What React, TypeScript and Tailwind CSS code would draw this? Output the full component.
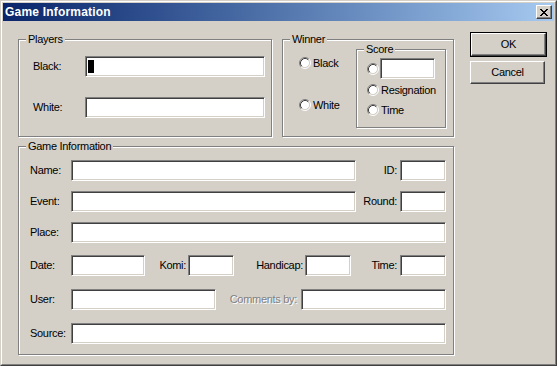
import React from "react";

// classic win2k dialog bits
const Field = ({ className, caret }: { className: string; caret?: boolean }) => (
  <div
    className={`${className} h-[21px] shrink-0 bg-white flex items-center border border-t-[#808080] border-l-[#808080] border-b-white border-r-white shadow-[inset_1px_1px_0_#404040,inset_-1px_-1px_0_#d4d0c8]`}
  >
    {caret && <span className="ml-[2px] w-[6px] h-[13px] bg-black" />}
  </div>
);

const Radio = () => (
  <svg width="12" height="12" viewBox="0 0 12 12" className="shrink-0">
    <circle cx="6" cy="6" r="4.5" fill="#fff" />
    <path d="M2.11 9.89A5.5 5.5 0 0 1 9.89 2.11" fill="none" stroke="#808080" />
    <path d="M9.89 2.11A5.5 5.5 0 0 1 2.11 9.89" fill="none" stroke="#fff" />
    <path d="M2.82 9.18A4.5 4.5 0 0 1 9.18 2.82" fill="none" stroke="#404040" />
    <path d="M9.18 2.82A4.5 4.5 0 0 1 2.82 9.18" fill="none" stroke="#d4d0c8" />
  </svg>
);

const Group = ({
  title,
  className,
  children,
}: {
  title: string;
  className: string;
  children: React.ReactNode;
}) => (
  <div
    className={`${className} relative shrink-0 border border-[#808080] shadow-[inset_1px_1px_0_#fff,1px_1px_0_#fff]`}
  >
    <span className="absolute -top-[8px] left-[7px] px-[2px] leading-[14px] bg-[#d4d0c8]">
      {title}
    </span>
    {children}
  </div>
);

const Label = ({ className, children }: { className: string; children: React.ReactNode }) => (
  <span className={`${className} shrink-0 leading-none`}>{children}</span>
);

const Button = ({ label }: { label: string }) => (
  <div className="w-[75px] h-[23px] flex items-center justify-center bg-[#d4d0c8] border border-t-white border-l-white border-b-[#404040] border-r-[#404040] shadow-[inset_-1px_-1px_0_#808080]">
    {label}
  </div>
);

const CloseGlyph = () => (
  <svg width="8" height="7" viewBox="0 0 8 7" shapeRendering="crispEdges">
    <path
      d="M0 0h2v1H0zM6 0h2v1H6zM1 1h2v1H1zM5 1h2v1H5zM2 2h4v1H2zM3 3h2v1H3zM2 4h4v1H2zM1 5h2v1H1zM5 5h2v1H5zM0 6h2v1H0zM6 6h2v1H6z"
      fill="#000"
    />
  </svg>
);

export default function App() {
  return (
    <div className="w-[557px] h-[366px] overflow-hidden bg-[#d4d0c8] text-[11px] tracking-[-0.3px] text-black font-['Liberation_Sans',Arial,sans-serif] border border-t-[#d4d0c8] border-l-[#d4d0c8] border-b-[#404040] border-r-[#404040]">
      <div className="h-full border border-t-white border-l-white border-b-[#808080] border-r-[#808080] p-px flex flex-col">
        {/* title bar */}
        <div className="h-[18px] shrink-0 flex items-center justify-between pl-[2px] pr-[2px] bg-gradient-to-r from-[#0a246a] to-[#a6caf0]">
          <span className="text-white font-bold text-[12px] tracking-[0.2px] leading-none">
            Game Information
          </span>
          <div className="w-[16px] h-[14px] flex items-center justify-center bg-[#d4d0c8] border border-t-white border-l-white border-b-[#404040] border-r-[#404040] shadow-[inset_-1px_-1px_0_#808080]">
            <CloseGlyph />
          </div>
        </div>

        <div className="flex items-start pl-[15px]">
          <div className="mt-[18px] w-[436px] shrink-0">
            <div className="flex gap-[10px]">
              <Group title="Players" className="w-[254px] h-[98px]">
                <div className="pt-[16px] pl-[14px] flex flex-col gap-[20px]">
                  <div className="flex items-center">
                    <Label className="w-[52px]">Black:</Label>
                    <Field className="w-[180px]" caret />
                  </div>
                  <div className="flex items-center">
                    <Label className="w-[52px]">White:</Label>
                    <Field className="w-[180px]" />
                  </div>
                </div>
              </Group>

              <Group title="Winner" className="w-[172px] h-[98px]">
                <div className="flex">
                  <div className="w-[73px] shrink-0 pl-[16px] pt-[16px] flex flex-col gap-[28px]">
                    <div className="h-[14px] flex items-center">
                      <Radio />
                      <span className="ml-[2px]">Black</span>
                    </div>
                    <div className="h-[14px] flex items-center">
                      <Radio />
                      <span className="ml-[2px]">White</span>
                    </div>
                  </div>
                  <Group title="Score" className="mt-[9px] w-[90px] h-[79px]">
                    <div className="pl-[10px] pt-[8px] flex flex-col">
                      <div className="h-[21px] flex items-center">
                        <Radio />
                        <Field className="ml-[1px] w-[55px]" />
                      </div>
                      <div className="mt-[4px] h-[14px] flex items-center">
                        <Radio />
                        <span className="ml-[2px]">Resignation</span>
                      </div>
                      <div className="mt-[6px] h-[14px] flex items-center">
                        <Radio />
                        <span className="ml-[2px]">Time</span>
                      </div>
                    </div>
                  </Group>
                </div>
              </Group>
            </div>

            <Group title="Game Information" className="mt-[9px] w-[436px] h-[209px]">
              <div className="pl-[11px] pt-[13px] flex flex-col">
                <div className="flex items-center">
                  <Label className="w-[41px]">Name:</Label>
                  <Field className="w-[285px]" />
                  <Label className="w-[44px] text-right pr-[3px]">ID:</Label>
                  <Field className="w-[46px]" />
                </div>
                <div className="mt-[10px] flex items-center">
                  <Label className="w-[41px]">Event:</Label>
                  <Field className="w-[285px]" />
                  <Label className="w-[44px] text-right pr-[3px]">Round:</Label>
                  <Field className="w-[46px]" />
                </div>
                <div className="mt-[10px] flex items-center">
                  <Label className="w-[41px]">Place:</Label>
                  <Field className="w-[375px]" />
                </div>
                <div className="mt-[12px] flex items-center">
                  <Label className="w-[41px]">Date:</Label>
                  <Field className="w-[74px]" />
                  <Label className="w-[43px] text-right pr-[2px]">Komi:</Label>
                  <Field className="w-[46px]" />
                  <Label className="w-[71px] text-right pr-[2px]">Handicap:</Label>
                  <Field className="w-[46px]" />
                  <Label className="w-[49px] text-right pr-[3px]">Time:</Label>
                  <Field className="w-[46px]" />
                </div>
                <div className="mt-[13px] flex items-center">
                  <Label className="w-[41px]">User:</Label>
                  <Field className="w-[145px]" />
                  <Label className="w-[85px] text-right pr-[4px] text-[#808080] [text-shadow:1px_1px_0_#fff]">
                    Comments by:
                  </Label>
                  <Field className="w-[145px]" />
                </div>
                <div className="mt-[13px] flex items-center">
                  <Label className="w-[41px]">Source:</Label>
                  <Field className="w-[375px]" />
                </div>
              </div>
            </Group>
          </div>

          <div className="ml-[16px] mt-[11px] flex flex-col gap-[4px]">
            <div className="border border-black">
              <Button label="OK" />
            </div>
            <Button label="Cancel" />
          </div>
        </div>
      </div>
    </div>
  );
}
